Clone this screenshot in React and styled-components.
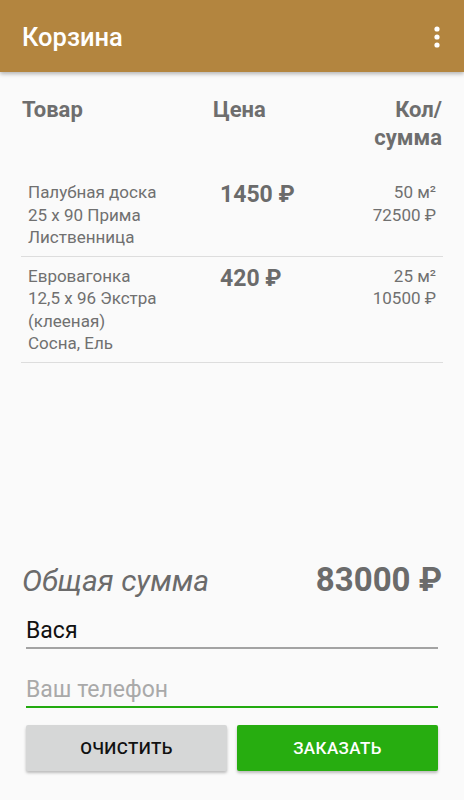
import React from "react";
import styled, { createGlobalStyle } from "styled-components";

const GlobalStyle = createGlobalStyle`
  html, body { margin: 0; padding: 0; background: #fafafa; }
  body { font-family: Roboto, "Noto Sans", "Liberation Sans", sans-serif; }
  * { box-sizing: border-box; }
`;

const Screen = styled.div`
  display: flex;
  flex-direction: column;
  min-height: 100vh;
  width: 464px;
  background: #fafafa;
`;

const Toolbar = styled.header`
  height: 72px;
  flex: none;
  display: flex;
  align-items: center;
  justify-content: space-between;
  padding: 2px 17px 0 22px;
  background: #b3853f;
  box-shadow: 0 2px 4px rgba(0, 0, 0, 0.28);
  position: relative;
  z-index: 1;
`;

const Title = styled.h1`
  margin: 0;
  font-size: 25.5px;
  font-weight: 500;
  color: #ffffff;
`;

const MenuButton = styled.button`
  border: none;
  background: none;
  padding: 0;
  width: 20px;
  height: 30px;
  display: flex;
  align-items: center;
  justify-content: center;
`;

const Main = styled.main`
  flex: 1;
  padding: 24px 21px 0;
`;

const HeaderRow = styled.div`
  display: grid;
  grid-template-columns: 191px 1fr 110px;
  padding: 0 1px 21px 1px;
  font-size: 22px;
  font-weight: 700;
  line-height: 28px;
  color: #6e6e6e;
`;

const HeadCell = styled.div`
  text-align: ${(p) => (p.$right ? "right" : "left")};
`;

const ItemRow = styled.div`
  display: grid;
  grid-template-columns: 192px 1fr auto;
  padding: 8px 7px 7px 7px;
  border-bottom: 1px solid #dddddd;
  font-size: 17px;
  line-height: 22.5px;
  color: #707070;
`;

const Lines = styled.div`
  display: flex;
  flex-direction: column;
  text-align: ${(p) => (p.$right ? "right" : "left")};
`;

const Price = styled.div`
  font-size: 23px;
  font-weight: 700;
  line-height: 28px;
  color: #6b6b6b;
`;

const Footer = styled.footer`
  flex: none;
  padding: 0 22px 29px;
  display: flex;
  flex-direction: column;
`;

const TotalRow = styled.div`
  display: flex;
  align-items: baseline;
  justify-content: space-between;
  height: 38px;
  color: #6b6b6b;
`;

const TotalLabel = styled.span`
  font-size: 30px;
  font-style: italic;
  font-weight: 400;
`;

const TotalValue = styled.span`
  font-size: 33px;
  font-weight: 700;
  line-height: 38px;
`;

const Field = styled.label`
  display: block;
  margin: ${(p) => p.$top}px 4px 0;
  padding-bottom: 3px;
  border-bottom: 2px solid ${(p) => (p.$focused ? "#22aa10" : "#a3a3a3")};
`;

const Input = styled.input`
  display: block;
  width: 100%;
  height: 28px;
  padding: 0;
  border: none;
  outline: none;
  background: transparent;
  font-family: Roboto, "Noto Sans", sans-serif;
  font-size: 23px;
  color: #111111;
  &::placeholder { color: #a9a9a9; }
`;

const Buttons = styled.div`
  display: grid;
  grid-template-columns: 1fr 1fr;
  gap: 10px;
  margin: 17px 4px 0;
`;

const Button = styled.button`
  height: 46px;
  border: none;
  border-radius: 2px;
  background: ${(p) => (p.$primary ? "#27ad10" : "#d6d7d7")};
  color: ${(p) => (p.$primary ? "#ffffff" : "#111111")};
  font-family: Roboto, "Noto Sans", sans-serif;
  font-size: 17px;
  font-weight: 500;
  letter-spacing: 0.4px;
  box-shadow: 0 2px 3px rgba(0, 0, 0, 0.25);
`;

const items = [
  {
    lines: ["Палубная доска", "25 x 90 Прима", "Лиственница"],
    price: "1450 ₽",
    qty: "50 м²",
    sum: "72500 ₽",
  },
  {
    lines: ["Евровагонка", "12,5 x 96 Экстра", "(клееная)", "Сосна, Ель"],
    price: "420 ₽",
    qty: "25 м²",
    sum: "10500 ₽",
  },
];

function Dots() {
  return (
    <svg width="8" height="24" viewBox="0 0 8 24">
      <circle cx="4" cy="4" r="2.6" fill="#fff" />
      <circle cx="4" cy="12" r="2.6" fill="#fff" />
      <circle cx="4" cy="20" r="2.6" fill="#fff" />
    </svg>
  );
}

export default function App() {
  return (
    <>
      <GlobalStyle />
      <Screen>
        <Toolbar>
          <Title>Корзина</Title>
          <MenuButton aria-label="menu">
            <Dots />
          </MenuButton>
        </Toolbar>
        <Main>
          <HeaderRow>
            <HeadCell>Товар</HeadCell>
            <HeadCell>Цена</HeadCell>
            <HeadCell $right>
              Кол/
              <br />
              сумма
            </HeadCell>
          </HeaderRow>
          {items.map((it, i) => (
            <ItemRow key={i}>
              <Lines>
                {it.lines.map((l) => (
                  <span key={l}>{l}</span>
                ))}
              </Lines>
              <Price>{it.price}</Price>
              <Lines $right>
                <span>{it.qty}</span>
                <span>{it.sum}</span>
              </Lines>
            </ItemRow>
          ))}
        </Main>
        <Footer>
          <TotalRow>
            <TotalLabel>Общая сумма</TotalLabel>
            <TotalValue>83000 ₽</TotalValue>
          </TotalRow>
          <Field $top={17.5}>
            <Input defaultValue="Вася" />
          </Field>
          <Field $top={25.7} $focused>
            <Input placeholder="Ваш телефон" />
          </Field>
          <Buttons>
            <Button>ОЧИСТИТЬ</Button>
            <Button $primary>ЗАКАЗАТЬ</Button>
          </Buttons>
        </Footer>
      </Screen>
    </>
  );
}
